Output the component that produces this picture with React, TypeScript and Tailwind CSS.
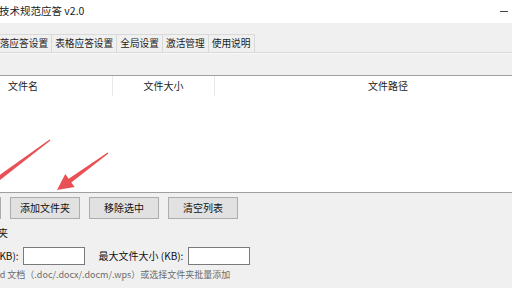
import React from "react";

const font = { fontFamily: '"Noto Sans CJK SC", "Noto Sans", sans-serif' };

export default function App() {
  const tabs = ["段落应答设置", "表格应答设置", "全局设置", "激活管理", "使用说明"];
  return (
    <div
      className="relative w-[512px] h-[288px] overflow-hidden bg-[#f0f0f0] text-[#1a1a1a]"
      style={font}
    >
      {/* title bar */}
      <div className="h-[23px] bg-white flex items-center justify-between">
        <span className="ml-[-1px] text-[10.5px] leading-none text-[#222]">技术规范应答 v2.0</span>
        <span className="mr-[4px] w-[8px] h-[1px] bg-[#444]" />
      </div>

      {/* tabs */}
      <div className="pt-[11px]">
        <div className="flex h-[18px] ml-[-13px]">
          {tabs.map((t) => (
            <div
              key={t}
              className="h-full px-[3px] flex items-center border-r border-t border-[#d9d9d9] bg-[#f0f0f0] text-[9.7px] leading-none text-[#222] whitespace-nowrap"
            >
              {t}
            </div>
          ))}
        </div>
        <div className="h-[1px] bg-[#d9d9d9]" />
        <div className="h-[1px] bg-[#f8f8f8]" />
      </div>

      {/* gap area */}
      <div className="h-[21px]" />

      {/* table */}
      <div className="border-t border-b border-[#a0a0a0] bg-white h-[118px] overflow-hidden">
        <div className="flex h-[20px] text-[10px] leading-none text-[#222]">
          <div className="w-[113px] shrink-0 border-r border-[#e8e8e8] flex items-center pl-[8px]">文件名</div>
          <div className="w-[102px] shrink-0 border-r border-[#e8e8e8] flex items-center justify-center">文件大小</div>
          <div className="w-[346px] shrink-0 flex items-center justify-center">文件路径</div>
        </div>
      </div>

      {/* buttons */}
      <div className="flex gap-[9px] mt-[4px] ml-[-69px]">
        {["添加文件", "添加文件夹", "移除选中", "清空列表"].map((b) => (
          <div
            key={b}
            className="w-[70px] h-[22px] shrink-0 bg-[#e1e1e1] border border-[#adadad] flex items-center justify-center text-[10px] leading-none text-[#111]"
          >
            {b}
          </div>
        ))}
      </div>

      {/* group label */}
      <div className="mt-[7px] h-[14px] flex items-center ml-[-42px] text-[10px] leading-none text-[#111] whitespace-nowrap">
        过滤文件夹
      </div>

      {/* inputs row */}
      <div className="mt-[7px] flex items-center h-[18px] ml-[-4px] text-[10px] leading-none text-[#111] whitespace-nowrap">
        <span>(KB):</span>
        <div className="ml-[4px] w-[62px] h-[18px] shrink-0 bg-white border border-[#7a7a7a]" />
        <span className="ml-[14px]">最大文件大小 (KB):</span>
        <div className="ml-[5px] w-[62px] h-[18px] shrink-0 bg-white border border-[#7a7a7a]" />
      </div>

      {/* help text */}
      <div className="mt-[2px] ml-[-37px] h-[14px] flex items-center text-[9px] leading-none text-[#6b6b6b] whitespace-nowrap">
        支持 Word 文档（.doc/.docx/.docm/.wps）或选择文件夹批量添加
      </div>

      {/* red annotation arrows */}
      <svg className="absolute left-0 top-0 pointer-events-none" width="512" height="288">
        <polygon
          points="49.6,139.5 -6.3,179.2 -3.7,182.8 50.4,140.5"
          fill="#e8474c"
          opacity="0.95"
        />
        <polygon
          points="107.6,152.4 68.7,178.8 65.3,174.1 57,190 74.7,187.1 71.3,182.4 108.4,153.6"
          fill="#e8474c"
          opacity="0.95"
        />
      </svg>
    </div>
  );
}
